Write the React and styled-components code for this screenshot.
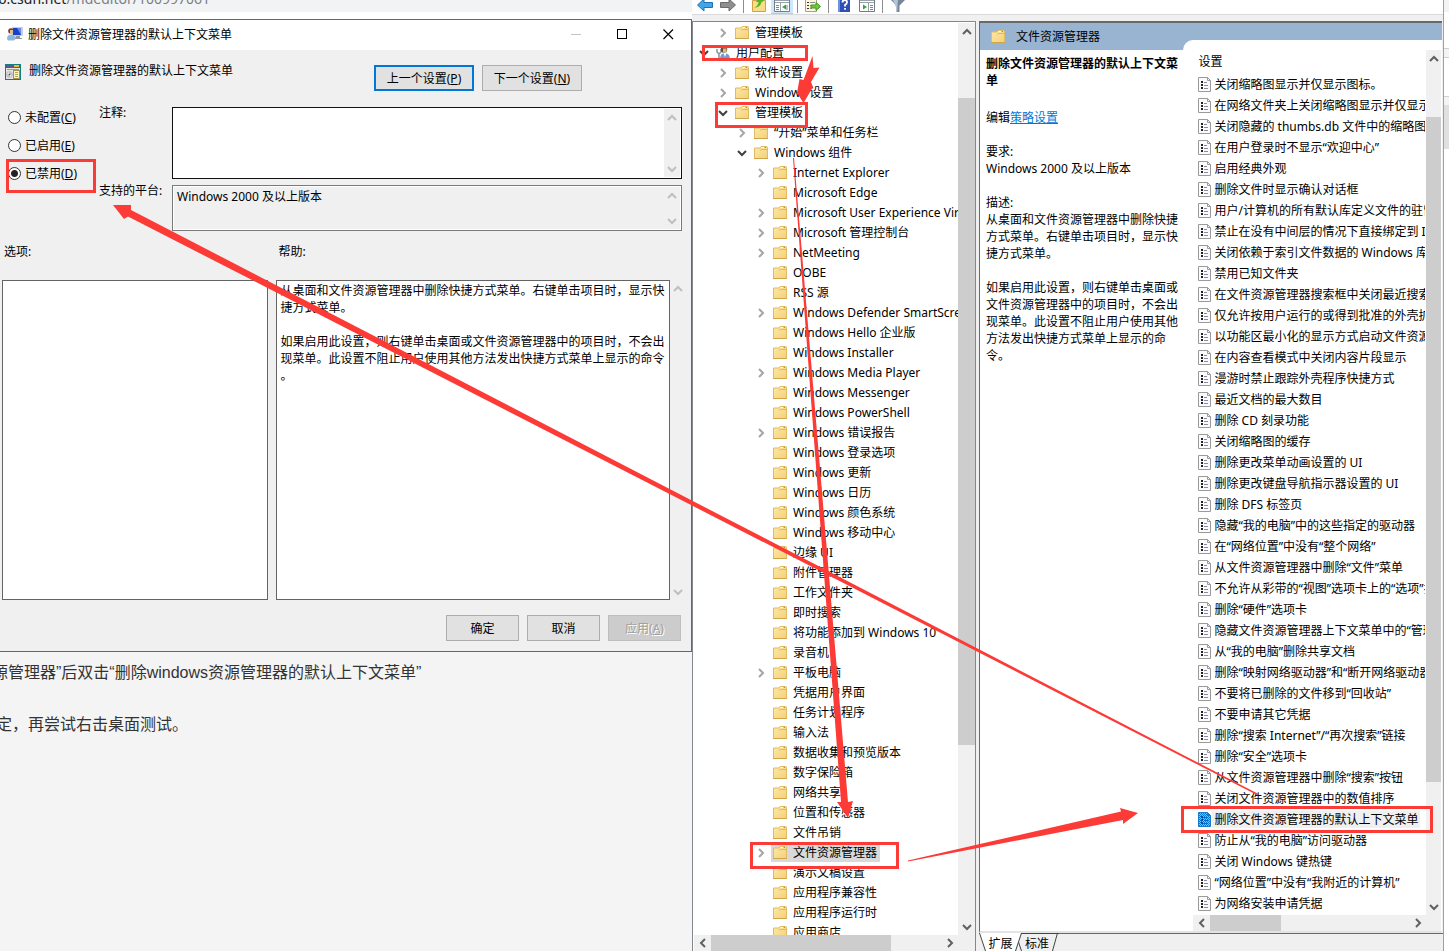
import React from "react";
import styled, { createGlobalStyle, css } from "styled-components";

const RED = "#fc3a36";

const GlobalStyle = createGlobalStyle`
  *, *::before, *::after { box-sizing: border-box; }
  body { margin: 0; background: #fff; overflow: hidden; }
  body, button, input, textarea {
    font-family: "Noto Sans", "Noto Sans CJK SC", sans-serif;
    font-size: 12px;
    line-height: 17px;
    color: #000;
  }
  button { padding: 0; border: 0; background: none; }
  ul, p, h1, h2 { margin: 0; padding: 0; font-size: 12px; font-weight: 400; }
  ul { list-style: none; }
  svg { display: block; flex: none; }
`;

const Desktop = styled.div`
  position: relative;
  display: grid;
  grid-template-columns: minmax(0, 692fr) minmax(0, 752fr) minmax(0, 5fr);
  height: 100vh;
  overflow: hidden;
`;

/* ---------- browser page behind the dialog ---------- */

const Browser = styled.div`
  display: flex;
  flex-direction: column;
  min-width: 0;
  background: #f4f4f4;
`;

const AddressBar = styled.div`
  height: 12px;
  overflow: hidden;
  background: #f1f3f4;
  color: #7b8084;
  white-space: nowrap;
`;

const Address = styled.p`
  margin: -10px 0 0 -2px;
  font-size: 14px;
  b { font-weight: 400; color: #202124; }
`;

const BrowserGap = styled.div`
  height: 7px;
  background: #fff;
`;

const Article = styled.article`
  display: flex;
  flex-direction: column;
  gap: 26px;
  padding-top: 8px;
  overflow: hidden;
`;

const Paragraph = styled.p`
  font-family: "Liberation Sans", "Noto Sans CJK SC", sans-serif;
  font-size: 16px;
  line-height: 26px;
  color: #333;
  white-space: nowrap;
  margin-left: ${(p) => p.$cut}px;
`;

/* ---------- scroll bars ---------- */

const BarBox = styled.div`
  display: flex;
  flex: none;
  flex-direction: ${(p) => (p.$horizontal ? "row" : "column")};
  ${(p) => (p.$horizontal ? "height" : "width")}: ${(p) => p.$size}px;
  background: #f0f0f0;
`;

const BarButton = styled.button`
  display: flex;
  align-items: center;
  justify-content: center;
  flex: none;
  width: ${(p) => (p.$horizontal ? 17 : p.$size)}px;
  height: ${(p) => (p.$horizontal ? p.$size : 17)}px;
`;

const BarTrack = styled.div`
  display: flex;
  flex: 1;
  flex-direction: inherit;
`;

const BarPart = styled.div`
  flex: ${(p) => p.$share} 1 0;
  background: ${(p) => (p.$thumb ? "#cdcdcd" : "transparent")};
`;

const chevrons = {
  up: "M1 7 L5 3 L9 7",
  down: "M1 3 L5 7 L9 3",
  left: "M7 1 L3 5 L7 9",
  right: "M3 1 L7 5 L3 9",
};

function Chevron({ to, color = "#606060", width = 2 }) {
  return (
    <svg width="10" height="10" viewBox="0 0 10 10">
      <path d={chevrons[to]} fill="none" stroke={color} strokeWidth={width} />
    </svg>
  );
}

function ScrollBar({ horizontal, size = 16, parts, muted }) {
  const color = muted ? "#bfbfbf" : "#606060";
  return (
    <BarBox $horizontal={horizontal} $size={size}>
      <BarButton $horizontal={horizontal} $size={size} type="button" disabled={muted} aria-label={horizontal ? "向左" : "向上"}>
        <Chevron to={horizontal ? "left" : "up"} color={color} />
      </BarButton>
      <BarTrack>
        {parts && (
          <>
            <BarPart $share={parts[0]} />
            <BarPart $share={parts[1]} $thumb />
            <BarPart $share={parts[2]} />
          </>
        )}
      </BarTrack>
      <BarButton $horizontal={horizontal} $size={size} type="button" disabled={muted} aria-label={horizontal ? "向右" : "向下"}>
        <Chevron to={horizontal ? "right" : "down"} color={color} />
      </BarButton>
    </BarBox>
  );
}

/* ---------- policy dialog ---------- */

const Dialog = styled.section`
  display: flex;
  flex-direction: column;
  background: #f0f0f0;
  border: solid #666;
  border-width: 1px 1px 1px 0;
`;

const TitleBar = styled.header`
  display: flex;
  align-items: center;
  height: 30px;
  padding: 0 0 2px 7px;
  background: #fff;
`;

const Title = styled.h1`
  flex: 1;
  margin-left: 5px;
`;

const WindowButton = styled.button`
  display: flex;
  align-items: center;
  justify-content: center;
  width: 46px;
  height: 28px;
`;

const PolicyHeader = styled.div`
  display: grid;
  grid-template-columns: minmax(0, 1fr) auto;
  align-items: start;
  height: 53px;
  padding: 12px 109px 0 5px;
`;

const PolicyName = styled.div`
  display: flex;
  gap: 8px;
  svg { margin-top: 2px; }
`;

const ButtonRow = styled.div`
  display: flex;
  justify-content: flex-end;
  gap: 8px;
  padding: ${(p) => (p.$footer ? "15px 10px 10px" : "3px 0 0")};
`;

const Button = styled.button`
  width: ${(p) => (p.$wide ? 100 : 73)}px;
  height: 26px;
  background: #e1e1e1;
  border: 1px solid #adadad;
  ${(p) => p.$primary && css`border: 2px solid #0078d7;`}
  &:disabled {
    background: #cccccc;
    border-color: #bfbfbf;
    color: #a0a0a0;
    text-shadow: 1px 1px 0 #fff;
  }
`;

const Fields = styled.div`
  display: grid;
  grid-template-columns: 99px minmax(0, 1fr);
  padding-right: 9px;
`;

const Radios = styled.div`
  display: flex;
  flex-direction: column;
`;

const RadioLabel = styled.label`
  display: flex;
  align-items: center;
  gap: 4px;
  height: 28px;
  padding-left: 8px;
`;

const Radio = styled.input`
  appearance: none;
  width: 13px;
  height: 13px;
  margin: 0;
  border: 1px solid #333;
  border-radius: 50%;
  background: #fff;
  &:checked { background: radial-gradient(circle, #222 3px, #fff 4px); }
`;

const TextFields = styled.div`
  display: grid;
  grid-template-columns: 73px minmax(0, 1fr);
  grid-template-rows: 72px 46px;
  row-gap: 6px;
  padding-top: 4px;
  label { line-height: 12px; white-space: nowrap; }
`;

const Field = styled.div`
  display: flex;
  padding: 1px;
  border: 1px solid ${(p) => (p.$readOnly ? "#7a7a7a" : "#111")};
  background: #fff;
`;

const TextArea = styled.textarea`
  flex: 1;
  min-width: 0;
  padding: 1px 0 0 3px;
  border: 0;
  outline: 0;
  resize: none;
  overflow: hidden;
  line-break: anywhere;
  background: ${(p) => (p.$gray ? "#f0f0f0" : "#fff")};
`;

const PanelGrid = styled.div`
  display: grid;
  grid-template-columns: minmax(0, 266fr) minmax(0, 401fr) 16px;
  padding: 0 5px 0 2px;
`;

const PanelLabel = styled.label`
  padding: 12px 0 0 2px;
  height: 49px;
  margin-left: ${(p) => (p.$second ? 8 : 0)}px;
`;

const Panel = styled.div`
  display: flex;
  height: 320px;
  margin-left: ${(p) => (p.$second ? 8 : 0)}px;
  border: 1px solid #646464;
  background: #fff;
`;

function PolicyDialog() {
  return (
    <Dialog>
      <TitleBar>
        <UserMonitorIcon />
        <Title>删除文件资源管理器的默认上下文菜单</Title>
        <WindowButton type="button" disabled aria-label="最小化">
          <svg width="11" height="11"><path d="M0 5.5 H10" stroke="#c4c4c4" /></svg>
        </WindowButton>
        <WindowButton type="button" aria-label="最大化">
          <svg width="11" height="11"><rect x=".5" y=".5" width="9" height="9" fill="none" stroke="#000" /></svg>
        </WindowButton>
        <WindowButton type="button" aria-label="关闭">
          <svg width="11" height="11"><path d="M.5 .5 L10 10 M10 .5 L.5 10" stroke="#000" strokeWidth="1.2" /></svg>
        </WindowButton>
      </TitleBar>
      <PolicyHeader>
        <PolicyName>
          <PolicyWindowIcon />
          <h2>删除文件资源管理器的默认上下文菜单</h2>
        </PolicyName>
        <ButtonRow>
          <Button type="button" $wide $primary>上一个设置(<u>P</u>)</Button>
          <Button type="button" $wide>下一个设置(<u>N</u>)</Button>
        </ButtonRow>
      </PolicyHeader>
      <Fields>
        <Radios>
          <RadioLabel><Radio type="radio" name="state" /><span>未配置(<u>C</u>)</span></RadioLabel>
          <RadioLabel><Radio type="radio" name="state" /><span>已启用(<u>E</u>)</span></RadioLabel>
          <RadioLabel><Radio type="radio" name="state" defaultChecked /><span>已禁用(<u>D</u>)</span></RadioLabel>
        </Radios>
        <TextFields>
          <label htmlFor="comment">注释:</label>
          <Field>
            <TextArea id="comment" />
            <ScrollBar muted />
          </Field>
          <label htmlFor="platform">支持的平台:</label>
          <Field $readOnly>
            <TextArea id="platform" $gray readOnly value="Windows 2000 及以上版本" />
            <ScrollBar muted />
          </Field>
        </TextFields>
      </Fields>
      <PanelGrid>
        <PanelLabel as="div">选项:</PanelLabel>
        <PanelLabel $second htmlFor="help">帮助:</PanelLabel>
        <span />
        <Panel />
        <Panel $second>
          <TextArea
            id="help"
            readOnly
            value={"从桌面和文件资源管理器中删除快捷方式菜单。右键单击项目时，显示快捷方式菜单。\n\n如果启用此设置，则右键单击桌面或文件资源管理器中的项目时，不会出现菜单。此设置不阻止用户使用其他方法发出快捷方式菜单上显示的命令。"}
          />
        </Panel>
        <ScrollBar muted />
      </PanelGrid>
      <ButtonRow $footer>
        <Button type="button">确定</Button>
        <Button type="button">取消</Button>
        <Button type="button" disabled>应用(<u>A</u>)</Button>
      </ButtonRow>
    </Dialog>
  );
}

/* ---------- icons ---------- */

function UserMonitorIcon() {
  return (
    <svg width="16" height="16" viewBox="0 0 16 16">
      <rect x="5" y="1" width="11" height="9" rx="1" fill="#c9cdd3" />
      <rect x="6" y="2" width="8" height="7" fill="#1640c8" />
      <path d="M10 2 H14 V9 Z" fill="#5f8df0" />
      <path d="M9 10 H13 V12 H15 V13 H8 V12 Z" fill="#8e959e" />
      <circle cx="4" cy="5" r="2.8" fill="#6d4526" />
      <path d="M3 4 H6 V8 H3 Z" fill="#e7b98c" />
      <path d="M0 13 Q0 8.500 4 8.500 Q8.500 8.500 8.500 13 L7 14.500 H1 Z" fill="#8fb7dc" />
    </svg>
  );
}

function PolicyWindowIcon() {
  return (
    <svg width="16" height="16" viewBox="0 0 16 16">
      <rect width="16" height="16" fill="#157c80" />
      <rect x="1" y="4" width="14" height="11" fill="#e6e6e2" />
      <rect x="1" y="1" width="14" height="3" fill="#5a578f" />
      <path d="M9 1 H14 V3 H9 Z" fill="#f0b63a" />
      <path d="M2 5.500 H14" stroke="#9a9a9a" />
      <circle cx="4.500" cy="10.500" r="3.500" fill="#c3c6cc" />
      <path d="M3 9 L6 12" stroke="#fff" strokeWidth="1.500" />
      <circle cx="4.500" cy="10.500" r="1" fill="#555" />
      <rect x="8.500" y="6.500" width="6" height="8" fill="#f8f2cd" stroke="#a3924a" />
      <path d="M10 8.500 H13 M10 10.500 H13 M10 12.500 H13" stroke="#b8a55c" />
    </svg>
  );
}

function FolderIcon() {
  return (
    <svg width="16" height="16" viewBox="0 0 16 16">
      <defs>
        <linearGradient id="folder" x1="0" y1="0" x2="1" y2="1">
          <stop offset="0" stopColor="#ffe9a8" />
          <stop offset="1" stopColor="#f2d07a" />
        </linearGradient>
      </defs>
      <path d="M1.500 3 H7 L8 1.500 H13.500 Q14.500 1.500 14.500 2.500 V13.500 H1.500 Z" fill="url(#folder)" stroke="#e0bb66" />
      <path d="M8.500 2.500 H13" stroke="#fff" />
      <path d="M11.500 2.500 H13" stroke="#4ba0dc" />
      <path d="M7 5.500 L8.500 4.500 H14" fill="none" stroke="#e2b85c" />
      <path d="M1 13.500 H15" stroke="#cfa548" />
    </svg>
  );
}

function UserConfigIcon() {
  return (
    <svg width="16" height="16" viewBox="0 0 16 16">
      <path d="M2 4 V7 L4 9 V14 M6 4 V7 L4 9" fill="none" stroke="#8393a3" strokeWidth="1.500" />
      <circle cx="9" cy="4.500" r="3.200" fill="#6d4a30" />
      <path d="M8 3.500 H11.500 V7.500 H8 Z" fill="#deb48c" />
      <path d="M5 14 Q5 8 10 8 Q15 9 15 14 Z" fill="#6d9fd2" />
      <path d="M8.500 8 L10 12 L11.500 8 Z" fill="#fff" />
    </svg>
  );
}

function PolicyItemIcon({ selected }) {
  const edge = selected ? "#1979ca" : "#9a9a9a";
  return (
    <svg width="14" height="16" viewBox="0 0 14 16">
      <defs>
        <pattern id="weave" width="2" height="2" patternUnits="userSpaceOnUse">
          <rect width="2" height="2" fill="#7fc0ef" />
          <path d="M0 0 H1 V1 H0 Z M1 1 H2 V2 H1 Z" fill="#0078d7" />
        </pattern>
      </defs>
      <path d="M.5 .5 H9.500 L12.500 3.500 V14.500 H.5 Z" fill={selected ? "url(#weave)" : "#fbfbfb"} stroke={edge} />
      <path d="M9.500 .5 V3.500 H12.500" fill="none" stroke={edge} />
      <path d="M3 4 H5 V6 H3 Z M3 7 H5 V9 H3 Z M3 10 H5 V12 H3 Z" fill={selected ? "#0b4f90" : "#222"} />
      <path d="M6 5.500 H9 M6 8.500 H10 M6 11.500 H10" stroke={selected ? "#1367b0" : "#8a87a8"} />
    </svg>
  );
}

const toolbarIcons = {
  back: <path d="M.5 8 L7 2 V5.500 H15.500 V10.500 H7 V14 Z" fill="#43a6e4" stroke="#1b74b8" />,
  forward: <path d="M15.500 8 L9 2 V5.500 H.5 V10.500 H9 V14 Z" fill="#8f8f8f" stroke="#6b6b6b" />,
  folderUp: (
    <>
      <path d="M1.500 3.500 H14.500 V14.500 H1.500 Z" fill="#fbdc86" stroke="#cfa244" />
      <path d="M3 11 Q7 9 7.500 5 L5 5 L9 0 L13 4 L10.500 5 Q10 10 3 11 Z" fill="#4cb82c" />
    </>
  ),
  panelLeft: (
    <>
      <path d="M.5 .5 H15.500 V14.500 H.5 Z" fill="#fff" stroke="#747c84" />
      <path d="M1 3.500 H15 M1 5.500 H15 M6.500 6 V14" stroke="#9aa2aa" />
      <path d="M2 8.500 H5 M2 10.500 H5 M2 12.500 H5 M13 8 V13" stroke="#7b8490" />
      <path d="M12 7.500 V12.500 L8 10 Z" fill="#35a535" />
    </>
  ),
  exportList: (
    <>
      <path d="M.5 .5 H11.500 V14.500 H.5 Z" fill="#fdf6d8" stroke="#aaa287" />
      <path d="M2 5.500 H4 M2 8.500 H4 M2 11.500 H4" stroke="#333" />
      <path d="M5 5.500 H10 M5 8.500 H7 M5 11.500 H7" stroke="#8b8b8b" />
      <path d="M6 8 H11 V5.500 L15.500 9.500 L11 13.500 V11 H6 Z" fill="#6ccb35" stroke="#42962a" />
    </>
  ),
  help: (
    <>
      <rect x="2" y="0" width="12" height="15" fill="#2d50b8" />
      <rect x="2" y="0" width="2" height="15" fill="#7090e0" />
      <path d="M6.500 5.500 Q6.500 3 8.700 3 Q11 3 11 5.200 Q11 6.700 9 8 V9.500 M9 11 V12.800" fill="none" stroke="#fff" strokeWidth="1.800" />
    </>
  ),
  panelRight: (
    <>
      <path d="M.5 .5 H15.500 V14.500 H.5 Z" fill="#fff" stroke="#747c84" />
      <path d="M1 3.500 H15 M1 5.500 H15 M9.500 6 V14" stroke="#9aa2aa" />
      <path d="M11 8.500 H14 M11 10.500 H14 M11 12.500 H14" stroke="#7b8490" />
      <path d="M4 7.500 V12.500 L8 10 Z" fill="#35a535" />
    </>
  ),
  filter: (
    <>
      <path d="M1 3 H15 L9.500 8.500 V15 H6.500 V8.500 Z" fill="#75879a" />
      <path d="M3 3 H8 L7.500 8 V14 Z" fill="#b4c4d4" />
    </>
  ),
};

/* ---------- policy editor window ---------- */

const Editor = styled.section`
  display: flex;
  flex-direction: column;
  min-width: 0;
  min-height: 0;
  background: #f0f0f0;
  border-right: 1px solid #a0a0a0;
`;

const Toolbar = styled.div`
  display: flex;
  align-items: flex-end;
  gap: 7px;
  height: 15px;
  padding: 0 0 1px 5px;
  overflow: hidden;
  background: #fff;
  border-bottom: 1px solid #d9d9d9;
  flex: none;
`;

const ToolButton = styled.button`
  flex: none;
  ${(p) =>
    p.$active &&
    css`
      padding: 0 3px;
      margin: 0 -3px -1px;
      background: #cce8ff;
      border-bottom: 1px solid #99d1ff;
    `}
`;

const ToolDivider = styled.span`
  width: 1px;
  height: 13px;
  background: #8d8d8d;
`;

const tools = ["back", "forward", null, "folderUp", "panelLeft", null, "exportList", null, "help", "panelRight", null, "filter"];
const toolNames = {
  back: "后退", forward: "前进", folderUp: "向上", panelLeft: "显示控制台树", exportList: "导出列表",
  help: "帮助", panelRight: "显示操作窗格", filter: "筛选器",
};

const Panes = styled.div`
  display: grid;
  grid-template-columns: minmax(0, 284fr) minmax(0, 464fr);
  column-gap: 3px;
  flex: 1;
  min-height: 0;
  padding-top: 6px;
`;

const TreePane = styled.nav`
  display: flex;
  flex-direction: column;
  min-height: 0;
  padding: 1px 0 0 1px;
  border: 1px solid #828790;
  border-bottom: 0;
  background: #fff;
`;

const PaneRow = styled.div`
  display: flex;
  flex: 1;
  min-height: 0;
  min-width: 0;
`;

const BottomBar = styled.div`
  display: flex;
  flex: none;
  background: #f0f0f0;
  padding-right: ${(p) => p.$corner}px;
  > div { flex: 1; }
`;

const TreeList = styled.ul`
  flex: 1;
  min-width: 0;
  overflow: hidden;
`;

const TreeRow = styled.li`
  display: flex;
  align-items: center;
  height: 20px;
  padding-left: ${(p) => 5 + p.$level * 19}px;
  white-space: nowrap;
`;

const Expander = styled.button`
  flex: none;
  width: 10px;
  height: 10px;
`;

const TreeLabel = styled.span`
  display: flex;
  align-items: center;
  gap: 5px;
  height: 18px;
  margin-left: 5px;
  padding: 0 3px 2px 1px;
  background: ${(p) => (p.$selected ? "#d9d9d9" : "transparent")};
  svg { margin-top: 2px; }
`;

/* level, text, state: "+" collapsed, "-" expanded, "" leaf */
const tree = [
  [1, "管理模板", "+"],
  [0, "用户配置", "-"],
  [1, "软件设置", "+"],
  [1, "Windows 设置", "+"],
  [1, "管理模板", "-"],
  [2, "“开始”菜单和任务栏", "+"],
  [2, "Windows 组件", "-"],
  [3, "Internet Explorer", "+"],
  [3, "Microsoft Edge", ""],
  [3, "Microsoft User Experience Virtualization", "+"],
  [3, "Microsoft 管理控制台", "+"],
  [3, "NetMeeting", "+"],
  [3, "OOBE", ""],
  [3, "RSS 源", ""],
  [3, "Windows Defender SmartScreen", "+"],
  [3, "Windows Hello 企业版", ""],
  [3, "Windows Installer", ""],
  [3, "Windows Media Player", "+"],
  [3, "Windows Messenger", ""],
  [3, "Windows PowerShell", ""],
  [3, "Windows 错误报告", "+"],
  [3, "Windows 登录选项", ""],
  [3, "Windows 更新", ""],
  [3, "Windows 日历", ""],
  [3, "Windows 颜色系统", ""],
  [3, "Windows 移动中心", ""],
  [3, "边缘 UI", ""],
  [3, "附件管理器", ""],
  [3, "工作文件夹", ""],
  [3, "即时搜索", ""],
  [3, "将功能添加到 Windows 10", ""],
  [3, "录音机", ""],
  [3, "平板电脑", "+"],
  [3, "凭据用户界面", ""],
  [3, "任务计划程序", ""],
  [3, "输入法", ""],
  [3, "数据收集和预览版本", ""],
  [3, "数字保险箱", ""],
  [3, "网络共享", ""],
  [3, "位置和传感器", ""],
  [3, "文件吊销", ""],
  [3, "文件资源管理器", "+", true],
  [3, "演示文稿设置", ""],
  [3, "应用程序兼容性", ""],
  [3, "应用程序运行时", ""],
  [3, "应用商店", ""],
];

function Tree() {
  return (
    <TreePane>
      <PaneRow>
        <TreeList>
          {tree.map(([level, text, state, selected], i) => (
            <TreeRow key={i} $level={level}>
              <Expander as={state ? "button" : "span"} aria-label={state ? text : undefined}>
                {state === "+" && <Chevron to="right" color="#a6a6a6" />}
                {state === "-" && <Chevron to="down" color="#404040" />}
              </Expander>
              <TreeLabel $selected={selected}>
                {level === 0 ? <UserConfigIcon /> : <FolderIcon />}
                {text}
              </TreeLabel>
            </TreeRow>
          ))}
        </TreeList>
        <ScrollBar size={17} parts={[58, 647, 173]} />
      </PaneRow>
      <BottomBar $corner={17}>
        <ScrollBar horizontal parts={[0, 180, 50]} />
      </BottomBar>
    </TreePane>
  );
}

const Details = styled.div`
  display: flex;
  flex-direction: column;
  min-width: 0;
  min-height: 0;
`;

const Extended = styled.div`
  display: grid;
  grid-template-columns: minmax(0, 203fr) minmax(0, 258fr);
  grid-template-rows: 27px minmax(0, 1fr);
  flex: 1;
  min-height: 0;
  margin-right: 1px;
  border: solid #696969;
  border-width: 2px 0 0 1px;
  border-bottom: 2px solid #e3e3e3;
  background: #99b4d1;
`;

const ExtendedTitle = styled.header`
  display: flex;
  align-items: center;
  gap: 10px;
  padding-left: 10px;
`;

const Description = styled.div`
  grid-row: 2;
  padding: 5px 5px 0 6px;
  background: #fff;
  p + p { margin-top: 17px; }
  a { color: #0078d7; text-decoration: underline; }
`;

const PolicyTitle = styled.h2`
  margin-bottom: 20px;
  font-weight: 700;
`;

const ListPanel = styled.div`
  grid-column: 2;
  grid-row: 1 / 3;
  display: flex;
  flex-direction: column;
  min-height: 0;
  margin-top: 17px;
  padding: 10px 1px 0 10px;
  border-top-left-radius: 10px;
  background: #fff;
`;

const PolicyList = styled.div`
  flex: 1;
  min-width: 0;
  overflow: hidden;
  padding: 0 1px 0 5px;
`;

const ListHeading = styled.h2`
  height: 24px;
  line-height: 24px;
`;

const PolicyRow = styled.li`
  display: flex;
  align-items: center;
  height: 21px;
  overflow: hidden;
  white-space: nowrap;
  span {
    padding: 0 2px;
    background: ${(p) => (p.$selected ? "#f0f0f0" : "transparent")};
  }
`;

const policies = [
  "关闭缩略图显示并仅显示图标。",
  "在网络文件夹上关闭缩略图显示并仅显示图标。",
  "关闭隐藏的 thumbs.db 文件中的缩略图缓存",
  "在用户登录时不显示“欢迎中心”",
  "启用经典外观",
  "删除文件时显示确认对话框",
  "用户/计算机的所有默认库定义文件的驻留位置",
  "禁止在没有中间层的情况下直接绑定到 IPropertySetStorage",
  "关闭依赖于索引文件数据的 Windows 库功能",
  "禁用已知文件夹",
  "在文件资源管理器搜索框中关闭最近搜索条目的显示",
  "仅允许按用户运行的或得到批准的外壳扩展",
  "以功能区最小化的显示方式启动文件资源管理器",
  "在内容查看模式中关闭内容片段显示",
  "漫游时禁止跟踪外壳程序快捷方式",
  "最近文档的最大数目",
  "删除 CD 刻录功能",
  "关闭缩略图的缓存",
  "删除更改菜单动画设置的 UI",
  "删除更改键盘导航指示器设置的 UI",
  "删除 DFS 标签页",
  "隐藏“我的电脑”中的这些指定的驱动器",
  "在“网络位置”中没有“整个网络”",
  "从文件资源管理器中删除“文件”菜单",
  "不允许从彩带的“视图”选项卡上的“选项”按钮",
  "删除“硬件”选项卡",
  "隐藏文件资源管理器上下文菜单中的“管理”项目",
  "从“我的电脑”删除共享文档",
  "删除“映射网络驱动器”和“断开网络驱动器”",
  "不要将已删除的文件移到“回收站”",
  "不要申请其它凭据",
  "删除“搜索 Internet”/“再次搜索”链接",
  "删除“安全”选项卡",
  "从文件资源管理器中删除“搜索”按钮",
  "关闭文件资源管理器中的数值排序",
  "删除文件资源管理器的默认上下文菜单",
  "防止从“我的电脑”访问驱动器",
  "关闭 Windows 键热键",
  "“网络位置”中没有“我附近的计算机”",
  "为网络安装申请凭据",
];
const selectedPolicy = "删除文件资源管理器的默认上下文菜单";

const Tabs = styled.div`
  display: flex;
  flex: none;
  height: 18px;
  overflow: hidden;
`;

const Tab = styled.button`
  width: ${(p) => (p.$active ? 29 : 28)}px;
  height: 20px;
  border-top: 1px solid ${(p) => (p.$active ? "#fff" : "#444")};
  background: ${(p) => (p.$active ? "#fff" : "#f0f0f0")};
`;

const TabRest = styled.div`
  flex: 1;
  border-top: 1px solid #696969;
`;

function DetailsPane() {
  return (
    <Details>
      <Extended>
        <ExtendedTitle>
          <FolderIcon />
          文件资源管理器
        </ExtendedTitle>
        <Description>
          <PolicyTitle>删除文件资源管理器的默认上下文菜单</PolicyTitle>
          <p>编辑<a href="#policy">策略设置</a></p>
          <p>要求:<br />Windows 2000 及以上版本</p>
          <p>描述:<br />从桌面和文件资源管理器中删除快捷方式菜单。右键单击项目时，显示快捷方式菜单。</p>
          <p>如果启用此设置，则右键单击桌面或文件资源管理器中的项目时，不会出现菜单。此设置不阻止用户使用其他方法发出快捷方式菜单上显示的命令。</p>
        </Description>
        <ListPanel>
          <PaneRow>
            <PolicyList>
              <ListHeading>设置</ListHeading>
              <ul>
                {policies.map((text) => (
                  <PolicyRow key={text} $selected={text === selectedPolicy}>
                    <PolicyItemIcon selected={text === selectedPolicy} />
                    <span>{text}</span>
                  </PolicyRow>
                ))}
              </ul>
            </PolicyList>
            <ScrollBar size={15} parts={[50, 664, 116]} />
          </PaneRow>
          <BottomBar $corner={15}>
            <ScrollBar horizontal parts={[0, 71, 128]} />
          </BottomBar>
        </ListPanel>
      </Extended>
      <Tabs>
        <svg width="7" height="18" viewBox="0 0 7 18">
          <path d="M0 0 L7 18 V0 Z" fill="#fff" />
          <path d="M.5 0 L6.500 18" stroke="#444" />
        </svg>
        <Tab type="button" $active>扩展</Tab>
        <svg width="8" height="18" viewBox="0 0 8 18">
          <path d="M0 0 H6 L0 18 Z" fill="#fff" />
          <path d="M6.500 0 L.5 18 M3.500 9 L6.500 18 M6 .5 H8" fill="none" stroke="#444" />
        </svg>
        <Tab type="button">标准</Tab>
        <svg width="8" height="18" viewBox="0 0 8 18">
          <path d="M0 .5 H8 M6.500 0 L1.500 18" fill="none" stroke="#444" />
        </svg>
        <TabRest />
      </Tabs>
    </Details>
  );
}

/* ---------- browser sliver on the far right ---------- */

const Sliver = styled.div`
  display: flex;
  flex-direction: column;
  background: #fff;
`;

const SliverBand = styled.div`
  height: ${(p) => p.$h}px;
  background: ${(p) => p.$fill || "#fff"};
  border-bottom: ${(p) => (p.$line ? "1px solid #cfcfcf" : "0")};
`;

/* ---------- hand-drawn marks over the windows ---------- */

const Marks = styled.svg`
  position: absolute;
  top: 0;
  left: 0;
  pointer-events: none;
`;

function Annotations() {
  return (
    <Marks width="1449" height="951" viewBox="0 0 1449 951">
      <g fill="none" stroke={RED} strokeWidth="3">
        <rect x="7.5" y="160.5" width="87" height="31" />
        <rect x="703.5" y="46.5" width="103" height="13" />
        <rect x="716.5" y="103.500" width="90" height="23" />
        <rect x="751.5" y="843.500" width="146" height="24" />
        <rect x="1182.500" y="807.500" width="249" height="24" />
      </g>
      <g fill={RED}>
        <path d="M812.500 56 L813.500 68 L819.500 67.500 L811 82 L813 87 L803.500 103 L797 93 L799.500 79 L803.500 80 Z" />
        <path d="M113 205 L131 205 L131 210 L1258.500 794 L1258 795.500 L128 216.500 L124 219 Z" />
        <path d="M793 158 L794 158 L848 802 L853 801 L848 818 L837 802 L841 802 Z" />
        <path d="M908 860.500 L1121 811.500 L1120 808 L1138 813 L1123 824 L1123 820 L908 861.500 Z" />
      </g>
    </Marks>
  );
}

export default function App() {
  return (
    <>
      <GlobalStyle />
      <Desktop>
        <Browser>
          <AddressBar><Address><b>b.csdn.net</b>/mdeditor/100997061</Address></AddressBar>
          <BrowserGap />
          <PolicyDialog />
          <Article>
            <Paragraph $cut={-8}>源管理器”后双击“删除windows资源管理器的默认上下文菜单”</Paragraph>
            <Paragraph $cut={-4}>定，再尝试右击桌面测试。</Paragraph>
          </Article>
        </Browser>
        <Editor>
          <Toolbar>
            {tools.map((name, i) =>
              name ? (
                <ToolButton key={i} type="button" aria-label={toolNames[name]} $active={name === "panelLeft"}>
                  <svg width="16" height="16" viewBox="0 0 16 16">{toolbarIcons[name]}</svg>
                </ToolButton>
              ) : (
                <ToolDivider key={i} />
              )
            )}
          </Toolbar>
          <Panes>
            <Tree />
            <DetailsPane />
          </Panes>
        </Editor>
        <Sliver>
          <SliverBand $h={12} $fill="#f1f3f4" />
          <SliverBand $h={37} $line />
          <SliverBand $h={9} $fill="#f4f4f4" $line />
          <SliverBand $h={39} $line />
          <SliverBand $h={8} $fill="#f4f4f4" />
          <SliverBand $h={44} $fill="#e0e0e0" />
        </Sliver>
        <Annotations />
      </Desktop>
    </>
  );
}
